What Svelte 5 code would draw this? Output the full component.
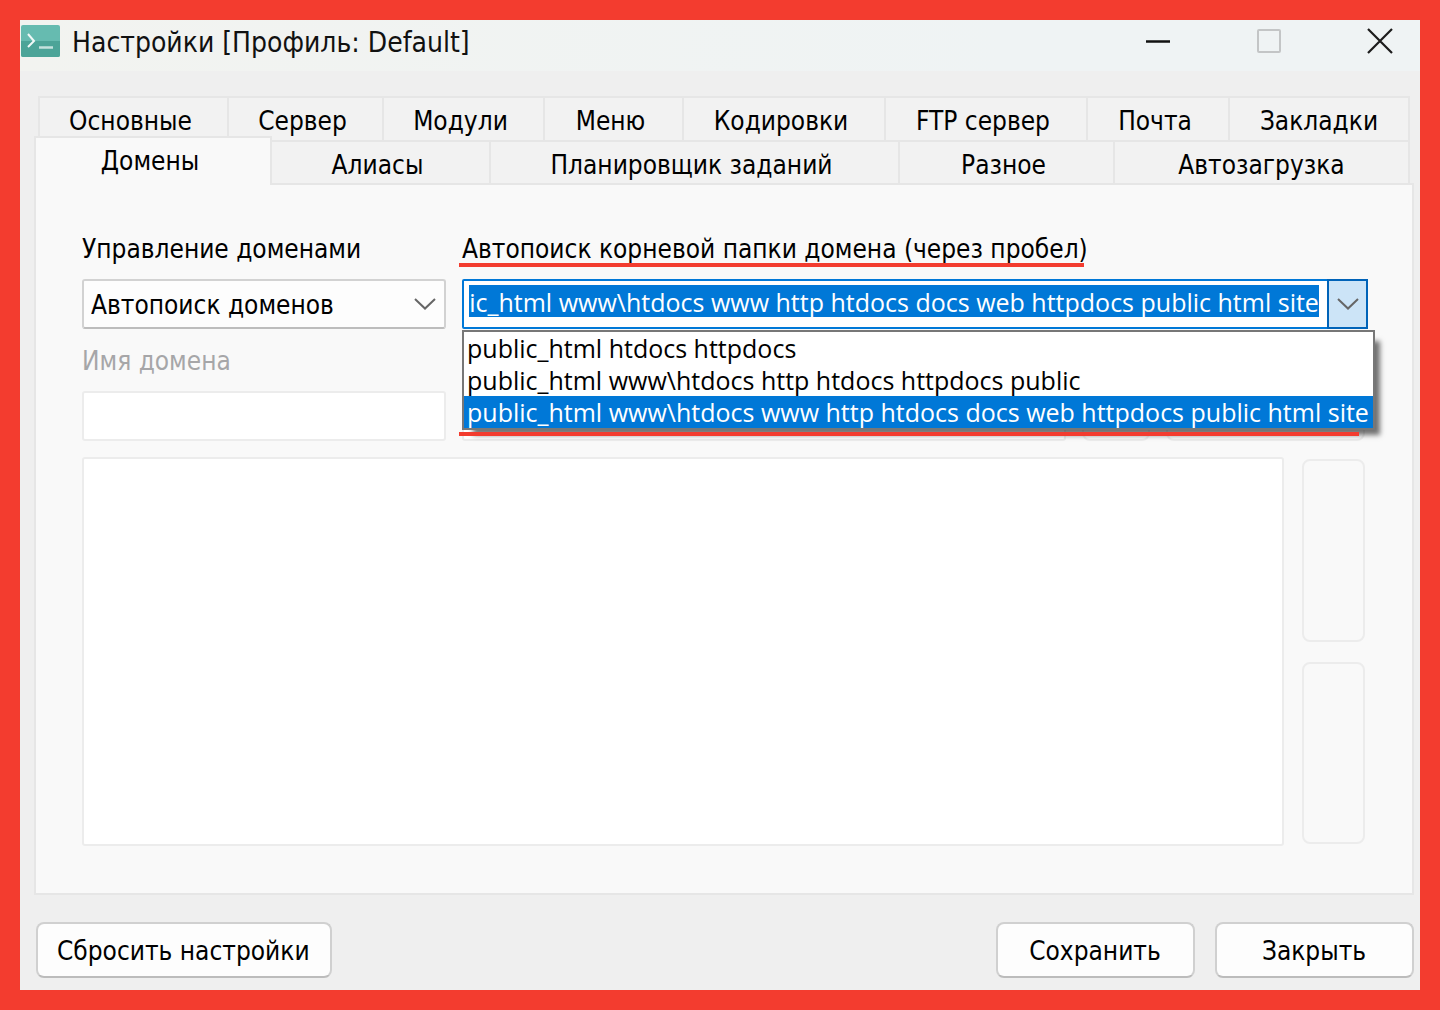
<script>
  import { onMount } from 'svelte';

  const upperTabs = ['Основные', 'Сервер', 'Модули', 'Меню', 'Кодировки', 'FTP сервер', 'Почта', 'Закладки'];
  const lowerTabs = ['Домены', 'Алиасы', 'Планировщик заданий', 'Разное', 'Автозагрузка'];
  const options = [
    'public_html htdocs httpdocs',
    'public_html www\\htdocs http htdocs httpdocs public',
    'public_html www\\htdocs www http htdocs docs web httpdocs public html site'
  ];

  let active = $state('Домены');
  let folders = $state(options[2]);
  let field;

  // Keep the end of a long value in view.
  onMount(() => {
    field.scrollLeft = field.scrollWidth;
  });
</script>

<main class="window">
  <header class="titlebar">
    <svg class="logo" viewBox="0 0 40 34" aria-hidden="true">
      <rect x="1" y="1" width="39" height="32" rx="2" fill="#66bbb0" />
      <path d="M1 17H40V31a2 2 0 0 1-2 2H3a2 2 0 0 1-2-2Z" fill="#4ca498" />
      <path d="M8 10l6 7-6 6" fill="none" stroke="#f1f8f7" stroke-width="2" />
      <path d="M19 23.500H33" stroke="#c4e2de" stroke-width="2.500" />
    </svg>
    <h1>Настройки [Профиль: Default]</h1>
    <div class="controls">
      <button aria-label="Свернуть">
        <svg viewBox="0 0 26 26"><path d="M1 13.500H25" stroke="#111" stroke-width="2.500" /></svg>
      </button>
      <button aria-label="Развернуть" disabled>
        <svg viewBox="0 0 26 26"><rect x="2" y="2" width="22" height="22" rx="1" fill="none" stroke="#c3c5c6" stroke-width="2" /></svg>
      </button>
      <button aria-label="Закрыть окно">
        <svg viewBox="0 0 26 26"><path d="M1 1L25 25M25 1L1 25" stroke="#1c1c1c" stroke-width="2.200" /></svg>
      </button>
    </div>
  </header>

  <nav class="tabs" aria-label="Разделы настроек">
    <div class="row upper">
      {#each upperTabs as tab}
        <button class="tab" class:active={active === tab} onclick={() => (active = tab)}>{tab}</button>
      {/each}
    </div>
    <div class="row lower">
      {#each lowerTabs as tab}
        <button class="tab" class:active={active === tab} onclick={() => (active = tab)}>{tab}</button>
      {/each}
    </div>
  </nav>

  <section class="panel">
    <div class="fields">
      <div class="group">
        <label for="mode">Управление доменами</label>
        <div class="select">
          <select id="mode"><option>Автопоиск доменов</option></select>
          <svg class="chevron" viewBox="0 0 22 12" aria-hidden="true"><path d="M1 1L11 10.500L21 1" /></svg>
        </div>
      </div>
      <div class="group">
        <label class="marked" for="folders">Автопоиск корневой папки домена (через пробел)</label>
        <div class="combo">
          <input id="folders" bind:this={field} bind:value={folders} />
          <button class="drop" aria-label="Показать список">
            <svg class="chevron" viewBox="0 0 22 12" aria-hidden="true"><path d="M1 1L11 10.500L21 1" /></svg>
          </button>
          <div class="popup" role="listbox" aria-label="Варианты папок">
            {#each options as option}
              <button class="option" role="option" aria-selected={folders === option} onclick={() => (folders = option)}>{option}</button>
            {/each}
          </div>
        </div>
      </div>
    </div>

    <div class="fields second">
      <div class="group">
        <label class="off" for="domain">Имя домена</label>
        <input class="box" id="domain" disabled />
      </div>
      <div class="target">
        <input class="box" aria-label="Папка домена" disabled />
        <button class="ghost" aria-label="Обзор" disabled></button>
        <button class="ghost" aria-label="Добавить" disabled></button>
      </div>
    </div>

    <div class="list">
      <textarea aria-label="Список доменов" disabled></textarea>
      <div class="side">
        <button class="ghost" aria-label="Вверх" disabled></button>
        <button class="ghost" aria-label="Вниз" disabled></button>
      </div>
    </div>
  </section>

  <footer>
    <button class="action reset">Сбросить настройки</button>
    <button class="action">Сохранить</button>
    <button class="action">Закрыть</button>
  </footer>
</main>

<style>
  :global(body) {
    margin: 0;
    background: #f33c2f;
  }
  :global(*) {
    box-sizing: border-box;
  }
  .window,
  button,
  input,
  select,
  textarea {
    font-family: 'DejaVu Sans Condensed', Tahoma, 'DejaVu Sans', sans-serif;
    font-size: 26px;
    color: #000;
  }
  button,
  input,
  select,
  textarea {
    margin: 0;
    padding: 0;
    border: 0;
    background: none;
  }
  .window {
    display: flex;
    flex-direction: column;
    min-height: 100vh;
    border: 20px solid #f33c2f;
    background: #efefef;
  }

  .titlebar {
    display: flex;
    align-items: center;
    height: 51px;
    padding-bottom: 10px;
    background: linear-gradient(90deg, #f2f3f0, #eff3f4 70%);
  }
  .logo {
    width: 40px;
    height: 34px;
  }
  h1 {
    flex: 1;
    margin: 0 0 0 12px;
    padding-top: 4px;
    font-size: 28px;
    font-weight: 400;
    line-height: 36px;
    color: #111;
  }
  .controls {
    display: flex;
    gap: 31px;
  }
  .controls button {
    display: grid;
    place-items: center;
    width: 80px;
    height: 40px;
  }
  .controls svg {
    width: 26px;
    height: 26px;
  }

  .tabs {
    padding: 25px 10px 0 14px;
  }
  .row {
    display: grid;
    border-right: 2px solid #e6e6e6;
  }
  .upper {
    grid-template-columns: 189fr 155fr 161fr 139fr 202fr 202fr 142fr 180fr;
    margin-left: 4px;
  }
  .lower {
    grid-template-columns: 236fr 219fr 409fr 215fr 295fr;
  }
  .tab {
    height: 44px;
    padding: 4px 6px 0 0;
    border-top: 2px solid #e6e6e6;
    border-left: 2px solid #e6e6e6;
    background: #f2f2f2;
    white-space: nowrap;
  }
  .tab:last-child {
    padding-right: 0;
  }
  .lower .tab {
    height: 43px;
  }
  .lower .tab.active {
    position: relative;
    height: 49px;
    margin: -4px -2px -2px 0;
    padding: 0 6px 2px 0;
    border-right: 2px solid #e6e6e6;
    background: #f9f9f9;
  }

  .panel {
    flex: 1;
    display: flex;
    flex-direction: column;
    margin: 0 6px 0 14px;
    padding: 46px 44px 47px 46px;
    border: 2px solid #e6e6e6;
    background: #f9f9f9;
  }
  .fields {
    display: grid;
    grid-template-columns: 364fr 906fr;
    gap: 16px;
  }
  .second {
    grid-template-columns: 364fr 903fr;
    align-items: end;
    margin-top: 14px;
    padding-right: 3px;
  }
  .group {
    display: flex;
    flex-direction: column;
    align-items: stretch;
    gap: 12px;
  }
  label {
    align-self: flex-start;
    line-height: 36px;
    white-space: nowrap;
  }
  label.off {
    color: #a6a6a8;
  }
  .marked {
    position: relative;
  }
  .marked::after {
    content: '';
    position: absolute;
    right: 4px;
    bottom: 0;
    left: -3px;
    height: 4px;
    background: #f33c2f;
  }
  .select {
    display: grid;
    align-items: center;
    height: 50px;
    border: 2px solid #d2d2d2;
    border-bottom-color: #bdbdbd;
    border-radius: 3px;
    background: #fdfdfd;
  }
  .select > * {
    grid-area: 1 / 1;
  }
  select {
    appearance: none;
    height: 46px;
    padding: 2px 40px 0 7px;
  }
  .chevron {
    width: 22px;
    height: 12px;
    fill: none;
    stroke: #666;
    stroke-width: 2;
    pointer-events: none;
  }
  .select .chevron {
    justify-self: end;
    margin-right: 8px;
  }
  .combo {
    position: relative;
    display: flex;
    height: 50px;
    border: 2px solid #0078d7;
    border-radius: 2px;
    background: #fff;
  }
  .combo input,
  .option {
    font-family: 'Open Sans', 'Noto Sans', sans-serif;
    font-size: 25px;
  }
  .combo input {
    flex: 1;
    min-width: 0;
    height: 32px;
    margin: 4px 8px 0 5px;
    padding-top: 2px;
    background: #0078d7;
    color: #fff;
    outline: 0;
  }
  .drop {
    display: grid;
    place-items: center;
    width: 41px;
    margin: -2px -2px -2px 0;
    border: 2px solid #0063b8;
    background: #cce4f7;
  }
  .popup {
    position: absolute;
    z-index: 1;
    top: calc(100% + 3px);
    right: -9px;
    left: -2px;
    border: 2px solid #777;
    background: #fff;
    box-shadow: 8px 8px 5px -3px rgba(0, 0, 0, 0.55);
  }
  .popup::after {
    content: '';
    position: absolute;
    right: 14px;
    bottom: -8px;
    left: -5px;
    height: 4px;
    background: #f33c2f;
  }
  .option {
    display: block;
    width: 100%;
    padding-left: 3px;
    line-height: 32px;
    text-align: left;
    white-space: nowrap;
  }
  .option[aria-selected='true'] {
    background: #0078d7;
    color: #fff;
  }

  .box,
  textarea {
    border: 2px solid #ececec;
    border-radius: 3px;
    background: #fff;
  }
  .box {
    width: 100%;
    height: 50px;
  }
  .target {
    display: grid;
    grid-template-columns: 604fr 68fr 199fr;
    gap: 16px;
  }
  .ghost {
    border: 2px solid #ececec;
    border-radius: 8px;
    background: #f9f9f9;
  }
  .list {
    flex: 1;
    display: flex;
    gap: 18px;
    min-height: 200px;
    margin-top: 16px;
    padding-right: 3px;
  }
  textarea {
    flex: 1;
    min-width: 0;
    resize: none;
  }
  .side {
    display: grid;
    grid-template-rows: 1fr 1fr;
    gap: 20px;
    width: 63px;
    padding: 2px 0;
  }

  footer {
    display: flex;
    gap: 20px;
    padding: 27px 6px 12px 16px;
  }
  .action {
    min-width: 199px;
    height: 56px;
    padding: 2px 20px 0 19px;
    border: 2px solid #d0d0d0;
    border-bottom-color: #bcbcbc;
    border-radius: 8px;
    background: #fdfdfd;
  }
  .reset {
    margin-right: auto;
  }
</style>
